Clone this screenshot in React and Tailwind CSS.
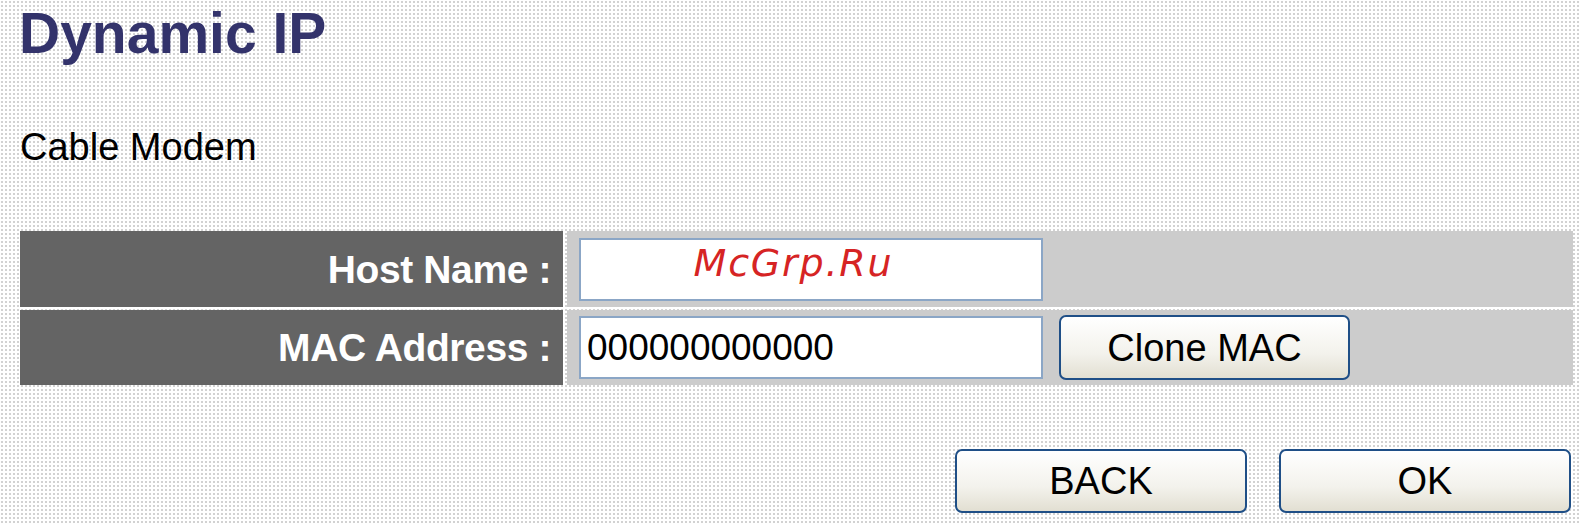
import React from 'react';

const xpButton =
  "flex items-center justify-center rounded-[7px] border-2 border-[#1f4f87] bg-[linear-gradient(#ffffff,#f3f2ec_60%,#e2dfd2)] text-[38px] leading-none text-black font-['Liberation_Sans',Arial,sans-serif]";

const Field = ({ value }) => (
  <div className="h-[63px] w-[464px] border-2 border-[#8ba6c6] bg-white flex items-center px-[6px] text-[37px] leading-none text-black font-['Liberation_Sans',Arial,sans-serif]">
    {value}
  </div>
);

const Row = ({ label, children }) => (
  <>
    <div className="bg-[#646464] flex items-center justify-end pr-[12px] text-white font-bold text-[39px] leading-none tracking-[-0.4px] font-['Liberation_Sans',Arial,sans-serif]">
      {label}
    </div>
    <div className="bg-[#cccccc] flex items-center gap-[16px] pl-[12px]">{children}</div>
  </>
);

export default function App() {
  return (
    <div className="relative w-[1579px] h-[523px] overflow-hidden bg-white bg-[radial-gradient(#d2d2d2_1px,transparent_1.4px)] bg-[size:4px_4px] pl-[19px] font-['Liberation_Sans',Arial,sans-serif]">
      <h1 className="text-[57px] leading-[66px] font-bold text-[#33336b]">Dynamic IP</h1>

      <p className="mt-[62px] ml-[1px] text-[38px] leading-[38px] text-black">Cable Modem</p>

      <div className="mt-[65px] ml-[1px] mr-[6px] grid grid-cols-[543px_1fr] grid-rows-[76px_75px] gap-x-[4px] gap-y-[3px]">
        <Row label="Host Name :">
          <Field value="" />
        </Row>
        <Row label="MAC Address :">
          <Field value="000000000000" />
          <button className={`${xpButton} h-[65px] w-[291px]`}>Clone MAC</button>
        </Row>
      </div>

      <div className="mt-[64px] flex justify-end gap-[32px] pr-[8px]">
        <button className={`${xpButton} h-[64px] w-[292px]`}>BACK</button>
        <button className={`${xpButton} h-[64px] w-[292px]`}>OK</button>
      </div>

      <div className="absolute left-0 right-0 top-[244px] flex justify-center pointer-events-none">
        <span className="pl-[8px] italic text-[38px] leading-none tracking-[1.8px] text-[#d62424] font-['DejaVu_Sans',sans-serif]">
          McGrp.Ru
        </span>
      </div>
    </div>
  );
}
